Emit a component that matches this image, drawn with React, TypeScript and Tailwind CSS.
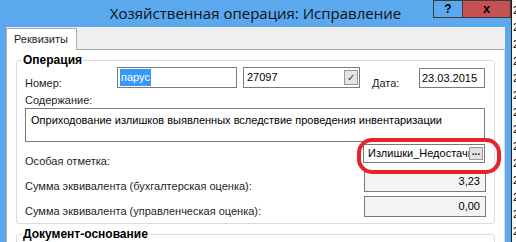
const bgRows = Array.from({ length: 14 }, (_, i) => i);

const Label = ({ children, pt }: { children: string; pt: string }) => (
  <span className={`${pt} whitespace-nowrap leading-[14px] text-[11px] text-[#1e1e1e]`}>{children}</span>
);

const App = () => {
  return (
    <div className="relative flex h-[242px] w-[516px] overflow-hidden bg-[#5ba8ee] font-['Liberation_Sans',sans-serif]">
      <div className="flex w-[511px] shrink-0 flex-col">
        {/* title bar */}
        <div className="relative h-[27px] shrink-0">
          <div className="pt-[3px] text-center font-['Open_Sans',sans-serif] text-[15px] leading-[20px] text-[#111]">
            Хозяйственная операция: Исправление
          </div>
          <div className="absolute right-0 top-0 flex h-[18px]">
            <div className="flex w-[29px] items-center justify-center border border-r-0 border-[#3b3b3b] bg-[#5ba8ee] text-[12px] font-bold text-black">
              ?
            </div>
            <div className="flex w-[49px] items-center justify-center border border-[#3b3b3b] bg-[#c75050] text-[13px] font-bold text-black">
              x
            </div>
          </div>
        </div>

        {/* client */}
        <div className="ml-[6px] flex w-[499px] flex-1 flex-col bg-[#f0f0f0] pt-[1px]">
          <div className="flex h-[22px] shrink-0">
            <div className="relative z-10 flex w-[71px] items-center border border-b-0 border-[#acacac] bg-white pl-[7px] text-[11px] text-[#1e1e1e]">
              Реквизиты
            </div>
          </div>
          <div className="-mt-[1px] flex-1 border border-r-[#d9d9d9] border-[#acacac] bg-white pl-[9px] pt-[10px]">
            {/* Операция */}
            <div className="relative w-[479px] rounded-[3px] border border-[#dcdcdc] px-[8px] pb-[6px]">
              <span className="absolute -top-[9px] left-[5px] bg-white px-[1px] text-[12px] font-bold leading-[16px] text-black">
                Операция
              </span>

              <div className="mt-[6px] flex h-[21px] items-start">
                <div className="w-[92px] shrink-0">
                  <Label pt="block pt-[9px]">Номер:</Label>
                </div>
                <div className="flex h-[21px] w-[120px] items-center border border-[#7a7a7a] pl-[2px] text-[11px]">
                  <span className="bg-[#3399ff] px-[1px] leading-[17px] text-white">парус</span>
                </div>
                <div className="ml-[6px] flex h-[21px] w-[117px] items-center justify-between border border-[#7a7a7a] pl-[3px] pr-[1px] text-[11px] text-black">
                  <span>27097</span>
                  <span className="flex h-[15px] w-[14px] items-center justify-center border border-[#9a9a9a] bg-[#e4e4e4] text-[10px] text-[#333]">
                    ✓
                  </span>
                </div>
                <div className="ml-[12px] w-[47px] shrink-0">
                  <Label pt="block pt-[9px]">Дата:</Label>
                </div>
                <div className="mt-[1px] flex h-[20px] w-[66px] items-center border border-[#7a7a7a] pl-[2px] text-[11px] text-black">
                  23.03.2015
                </div>
              </div>

              <div className="mt-[5px] h-[14px]">
                <Label pt="block">Содержание:</Label>
              </div>
              <div className="mt-[1px] h-[34px] w-[460px] border border-[#7a7a7a] pl-[5px] pt-[4px] text-[11px] leading-[14px] text-black">
                Оприходование излишков выявленных вследствие проведения инвентаризации
              </div>

              <div className="mt-[2px] flex h-[19px] items-start justify-between">
                <Label pt="block pt-[10px]">Особая отметка:</Label>
                <div className="relative mr-[1px] flex h-[19px] w-[122px] items-center border border-[#7a7a7a] bg-white pl-[4px] pr-[1px]">
                  <span className="flex-1 overflow-hidden whitespace-nowrap text-[11px] text-black">Излишки_Недостачи</span>
                  <span className="flex h-[13px] w-[14px] shrink-0 items-center justify-center border border-[#9a9a9a] bg-[#e1e1e1] pb-[4px] text-[10px] font-bold text-[#222]">
                    ...
                  </span>
                  <div className="absolute -left-[7px] -top-[7px] h-[36px] w-[144px] rounded-[15px] border-4 border-[#e8212b]" />
                </div>
              </div>

              <div className="mt-[8px] flex h-[21px] items-start justify-between">
                <Label pt="block pt-[8px]">Сумма эквивалента (бухгалтерская оценка):</Label>
                <div className="flex h-[21px] w-[122px] items-center justify-end border border-[#7a7a7a] bg-[#f4f4f4] pr-[5px] text-[11px] text-black">
                  3,23
                </div>
              </div>
              <div className="mt-[4px] flex h-[21px] items-start justify-between">
                <Label pt="block pt-[8px]">Сумма эквивалента (управленческая оценка):</Label>
                <div className="flex h-[21px] w-[122px] items-center justify-end border border-[#7a7a7a] bg-[#f4f4f4] pr-[5px] text-[11px] text-black">
                  0,00
                </div>
              </div>
            </div>

            {/* Документ-основание */}
            <div className="relative mt-[10px] h-[40px] w-[479px] rounded-[3px] border border-[#dcdcdc]">
              <span className="absolute -top-[9px] left-[5px] bg-white px-[1px] text-[12px] font-bold leading-[16px] text-black">
                Документ-основание
              </span>
            </div>
          </div>
        </div>
      </div>

      {/* window behind */}
      <div className="flex flex-1 flex-col border-l border-[#222] bg-white pt-[4px]">
        {bgRows.map((r) => (
          <div key={r} className="h-[18px] pl-[1px] text-[11px] leading-[12px] text-black">
            2
          </div>
        ))}
      </div>
    </div>
  );
};

export default App;
